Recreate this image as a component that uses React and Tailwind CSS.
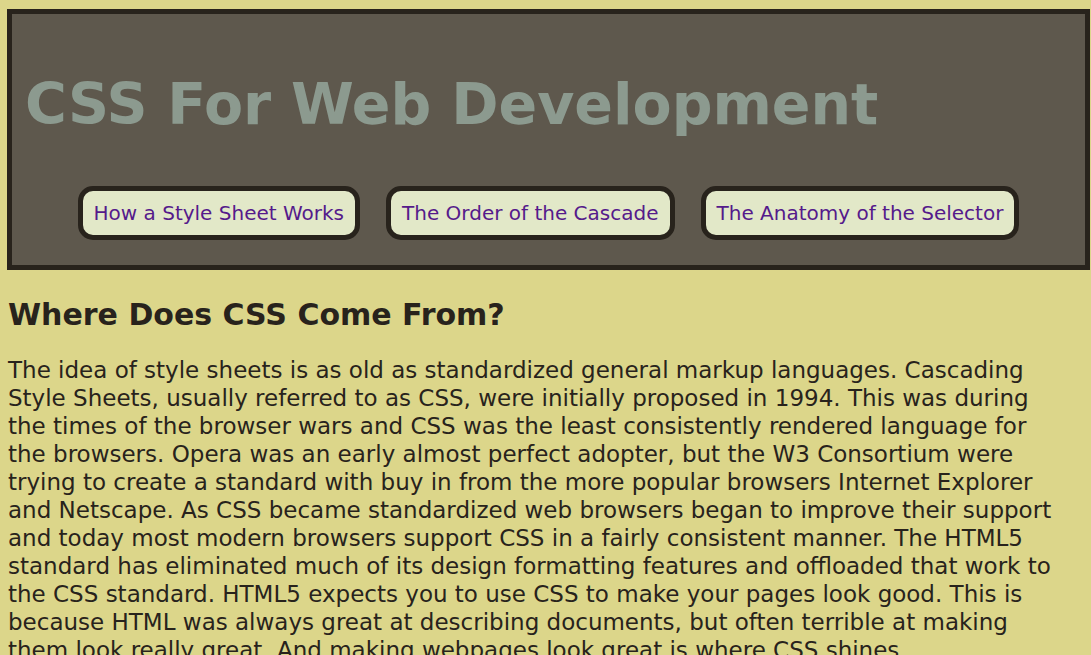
export default function App() {
  const font = { fontFamily: '"DejaVu Sans", Verdana, sans-serif' };
  return (
    <div className="min-h-screen bg-[#dcd68a] text-[#28231c] pt-[9px]" style={font}>
      <header className="ml-[7px] mr-[1px] h-[261px] border-[5px] border-[#28231c] bg-[#5e584d]">
        <h1 className="pl-[13px] pt-[58px] text-[57px] font-bold leading-[65px] text-[#8c9a8f]">
          CSS For Web Development
        </h1>
        <nav className="mt-[49px] flex justify-center gap-[26px]">
          {["How a Style Sheet Works", "The Order of the Cascade", "The Anatomy of the Selector"].map((t) => (
            <a
              key={t}
              href="#"
              className="rounded-[15px] border-[5px] border-[#28231c] bg-[#e2e8c8] px-[11px] py-[10px] text-[20px] leading-[24px] text-[#551a8b]"
            >
              {t}
            </a>
          ))}
        </nav>
      </header>
      <main className="pl-[8px] pr-[20px]">
        <h2 className="mt-[27px] text-[30px] font-bold leading-[35px]">Where Does CSS Come From?</h2>
        <p className="mt-[24px] text-[23px] leading-[28px]">
          The idea of style sheets is as old as standardized general markup languages. Cascading Style Sheets, usually
          referred to as CSS, were initially proposed in 1994. This was during the times of the browser wars and CSS was
          the least consistently rendered language for the browsers. Opera was an early almost perfect adopter, but the W3
          Consortium were trying to create a standard with buy in from the more popular browsers Internet Explorer and
          Netscape. As CSS became standardized web browsers began to improve their support and today most modern browsers
          support CSS in a fairly consistent manner. The HTML5 standard has eliminated much of its design formatting
          features and offloaded that work to the CSS standard. HTML5 expects you to use CSS to make your pages look good.
          This is because HTML was always great at describing documents, but often terrible at making them look really
          great. And making webpages look great is where CSS shines.
        </p>
      </main>
    </div>
  );
}
